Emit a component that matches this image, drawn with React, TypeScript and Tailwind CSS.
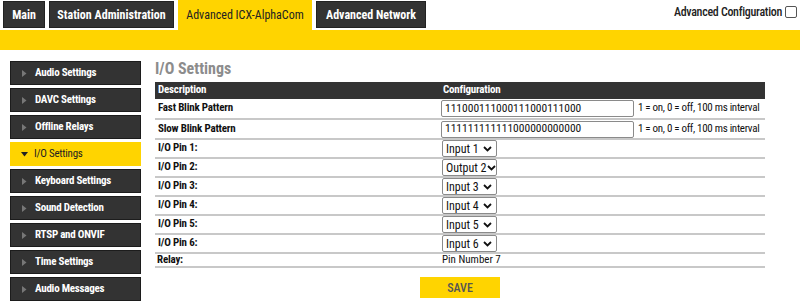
import React from 'react';

const tabs = [
  { name: 'Main', active: false, w: 'w-[42px]' },
  { name: 'Station Administration', active: false, w: 'w-[125px]' },
  { name: 'Advanced ICX-AlphaCom', active: true, w: 'w-[134px]' },
  { name: 'Advanced Network', active: false, w: 'w-[110px]' },
];

const menu = [
  'Audio Settings',
  'DAVC Settings',
  'Offline Relays',
  'I/O Settings',
  'Keyboard Settings',
  'Sound Detection',
  'RTSP and ONVIF',
  'Time Settings',
  'Audio Messages',
];

const pins = ['Input 1', 'Output 2', 'Input 3', 'Input 4', 'Input 5', 'Input 6'];

const Chevron = () => (
  <svg width="9" height="6" viewBox="0 0 9 6" className="shrink-0">
    <path d="M1 1l3.5 3.5L8 1" fill="none" stroke="#111" strokeWidth="1.8" />
  </svg>
);

const PinSelect = ({ value }: { value: string }) => (
  <div className="flex h-[17px] w-[55px] items-center justify-between rounded-[2px] border border-[#8a8a8a] bg-white pl-[3px] pr-[4px] text-[12px] text-[#111] [font-stretch:77%]">
    <span>{value}</span>
    <Chevron />
  </div>
);

export default function App() {
  return (
    <div className="h-[303px] w-[800px] overflow-hidden whitespace-nowrap bg-white font-['Roboto',sans-serif] text-[11px] [font-stretch:77%]">
      {/* Top tabs */}
      <div className="flex items-start justify-between">
        <div className="flex items-start gap-[4px] pl-[3px]">
          {tabs.map((t) =>
            t.active ? (
              <div
                key={t.name}
                className={`flex h-[30px] items-start justify-center bg-[#ffd400] pt-[6px] text-[12px] text-[#222] ${t.w}`}
              >
                {t.name}
              </div>
            ) : (
              <div
                key={t.name}
                className={`mt-[1px] flex h-[27px] items-center justify-center border border-[#222] bg-[#333] text-[12px] font-bold text-white ${t.w}`}
              >
                {t.name}
              </div>
            ),
          )}
        </div>
        <label className="mr-[3px] mt-[3px] flex items-center gap-[3px] text-[12px] font-medium tracking-[-0.3px] text-[#222]">
          Advanced Configuration
          <span className="h-[12px] w-[12px] rounded-[2px] border border-[#555] bg-white" />
        </label>
      </div>
      <div className="h-[20px] bg-[#ffd400]" />

      <div className="flex items-start">
        {/* Sidebar */}
        <div className="ml-[10px] mt-[11px] flex w-[131px] flex-col gap-[3px] tracking-[-0.25px]">
          {menu.map((m) => {
            const active = m === 'I/O Settings';
            return (
              <div
                key={m}
                className={
                  active
                    ? 'flex h-[24px] items-center bg-[#ffd400] pl-[11px] text-[11px] text-[#222]'
                    : 'flex h-[24px] items-center border border-[#1c1c1c] bg-[#333] pl-[11px] text-[11px] font-bold text-white'
                }
              >
                {active ? (
                  <svg width="7" height="5" viewBox="0 0 7 5" className="mr-[6px]">
                    <path d="M0 0h7L3.5 4.5z" fill="#222" />
                  </svg>
                ) : (
                  <svg width="5" height="7" viewBox="0 0 5 7" className="mr-[8px]">
                    <path d="M0 0v7l4.5-3.5z" fill="#777" />
                  </svg>
                )}
                {m}
              </div>
            );
          })}
        </div>

        {/* Content */}
        <div className="ml-[14px] mt-[8px] w-[610px]">
          <div className="h-[22px] text-[16px] font-bold leading-[22px] text-[#8c8c8c]">I/O Settings</div>
          <table className="mt-[2px] w-full table-fixed border-collapse">
            <thead>
              <tr className="h-[17px] bg-[#333] text-left text-[11px] font-bold tracking-[-0.2px] text-white">
                <th className="w-[286px] pl-[3px] font-bold">Description</th>
                <th className="pl-[2px] font-bold">Configuration</th>
              </tr>
            </thead>
            <tbody className="text-[11px] text-[#111]">
              {[
                ['Fast Blink Pattern', '111000111000111000111000'],
                ['Slow Blink Pattern', '111111111111000000000000'],
              ].map(([label, value]) => (
                <tr key={label} className="h-[20px] border-b-2 border-[#c8c8c8]">
                  <td className="pl-[3px] font-bold tracking-[-0.2px]">{label}</td>
                  <td className="pl-[0px]">
                    <div className="flex items-center gap-[4px] [font-stretch:75%]">
                      <div className="flex h-[17px] w-[193px] items-center rounded-[2px] border border-[#8a8a8a] pl-[3px] text-[11.5px]">
                        {value}
                      </div>
                      <span className="tracking-[-0.3px]">1 = on, 0 = off, 100 ms interval</span>
                    </div>
                  </td>
                </tr>
              ))}
              {pins.map((p, i) => (
                <tr key={p} className="h-[19px] border-b-2 border-[#c8c8c8]">
                  <td className="pl-[3px] font-bold tracking-[-0.2px]">I/O Pin {i + 1}:</td>
                  <td className="pl-[1px]">
                    <PinSelect value={p} />
                  </td>
                </tr>
              ))}
              <tr className="h-[14px] border-b-2 border-[#c8c8c8] leading-[12px]">
                <td className="pl-[2px] font-bold tracking-[-0.2px]">Relay:</td>
                <td className="pl-[1px]">Pin Number 7</td>
              </tr>
            </tbody>
          </table>
          <div className="mt-[9px] flex justify-center">
            <button className="h-[21px] w-[80px] bg-[#ffd400] text-[12px] font-medium text-[#555]">SAVE</button>
          </div>
        </div>
      </div>
    </div>
  );
}
